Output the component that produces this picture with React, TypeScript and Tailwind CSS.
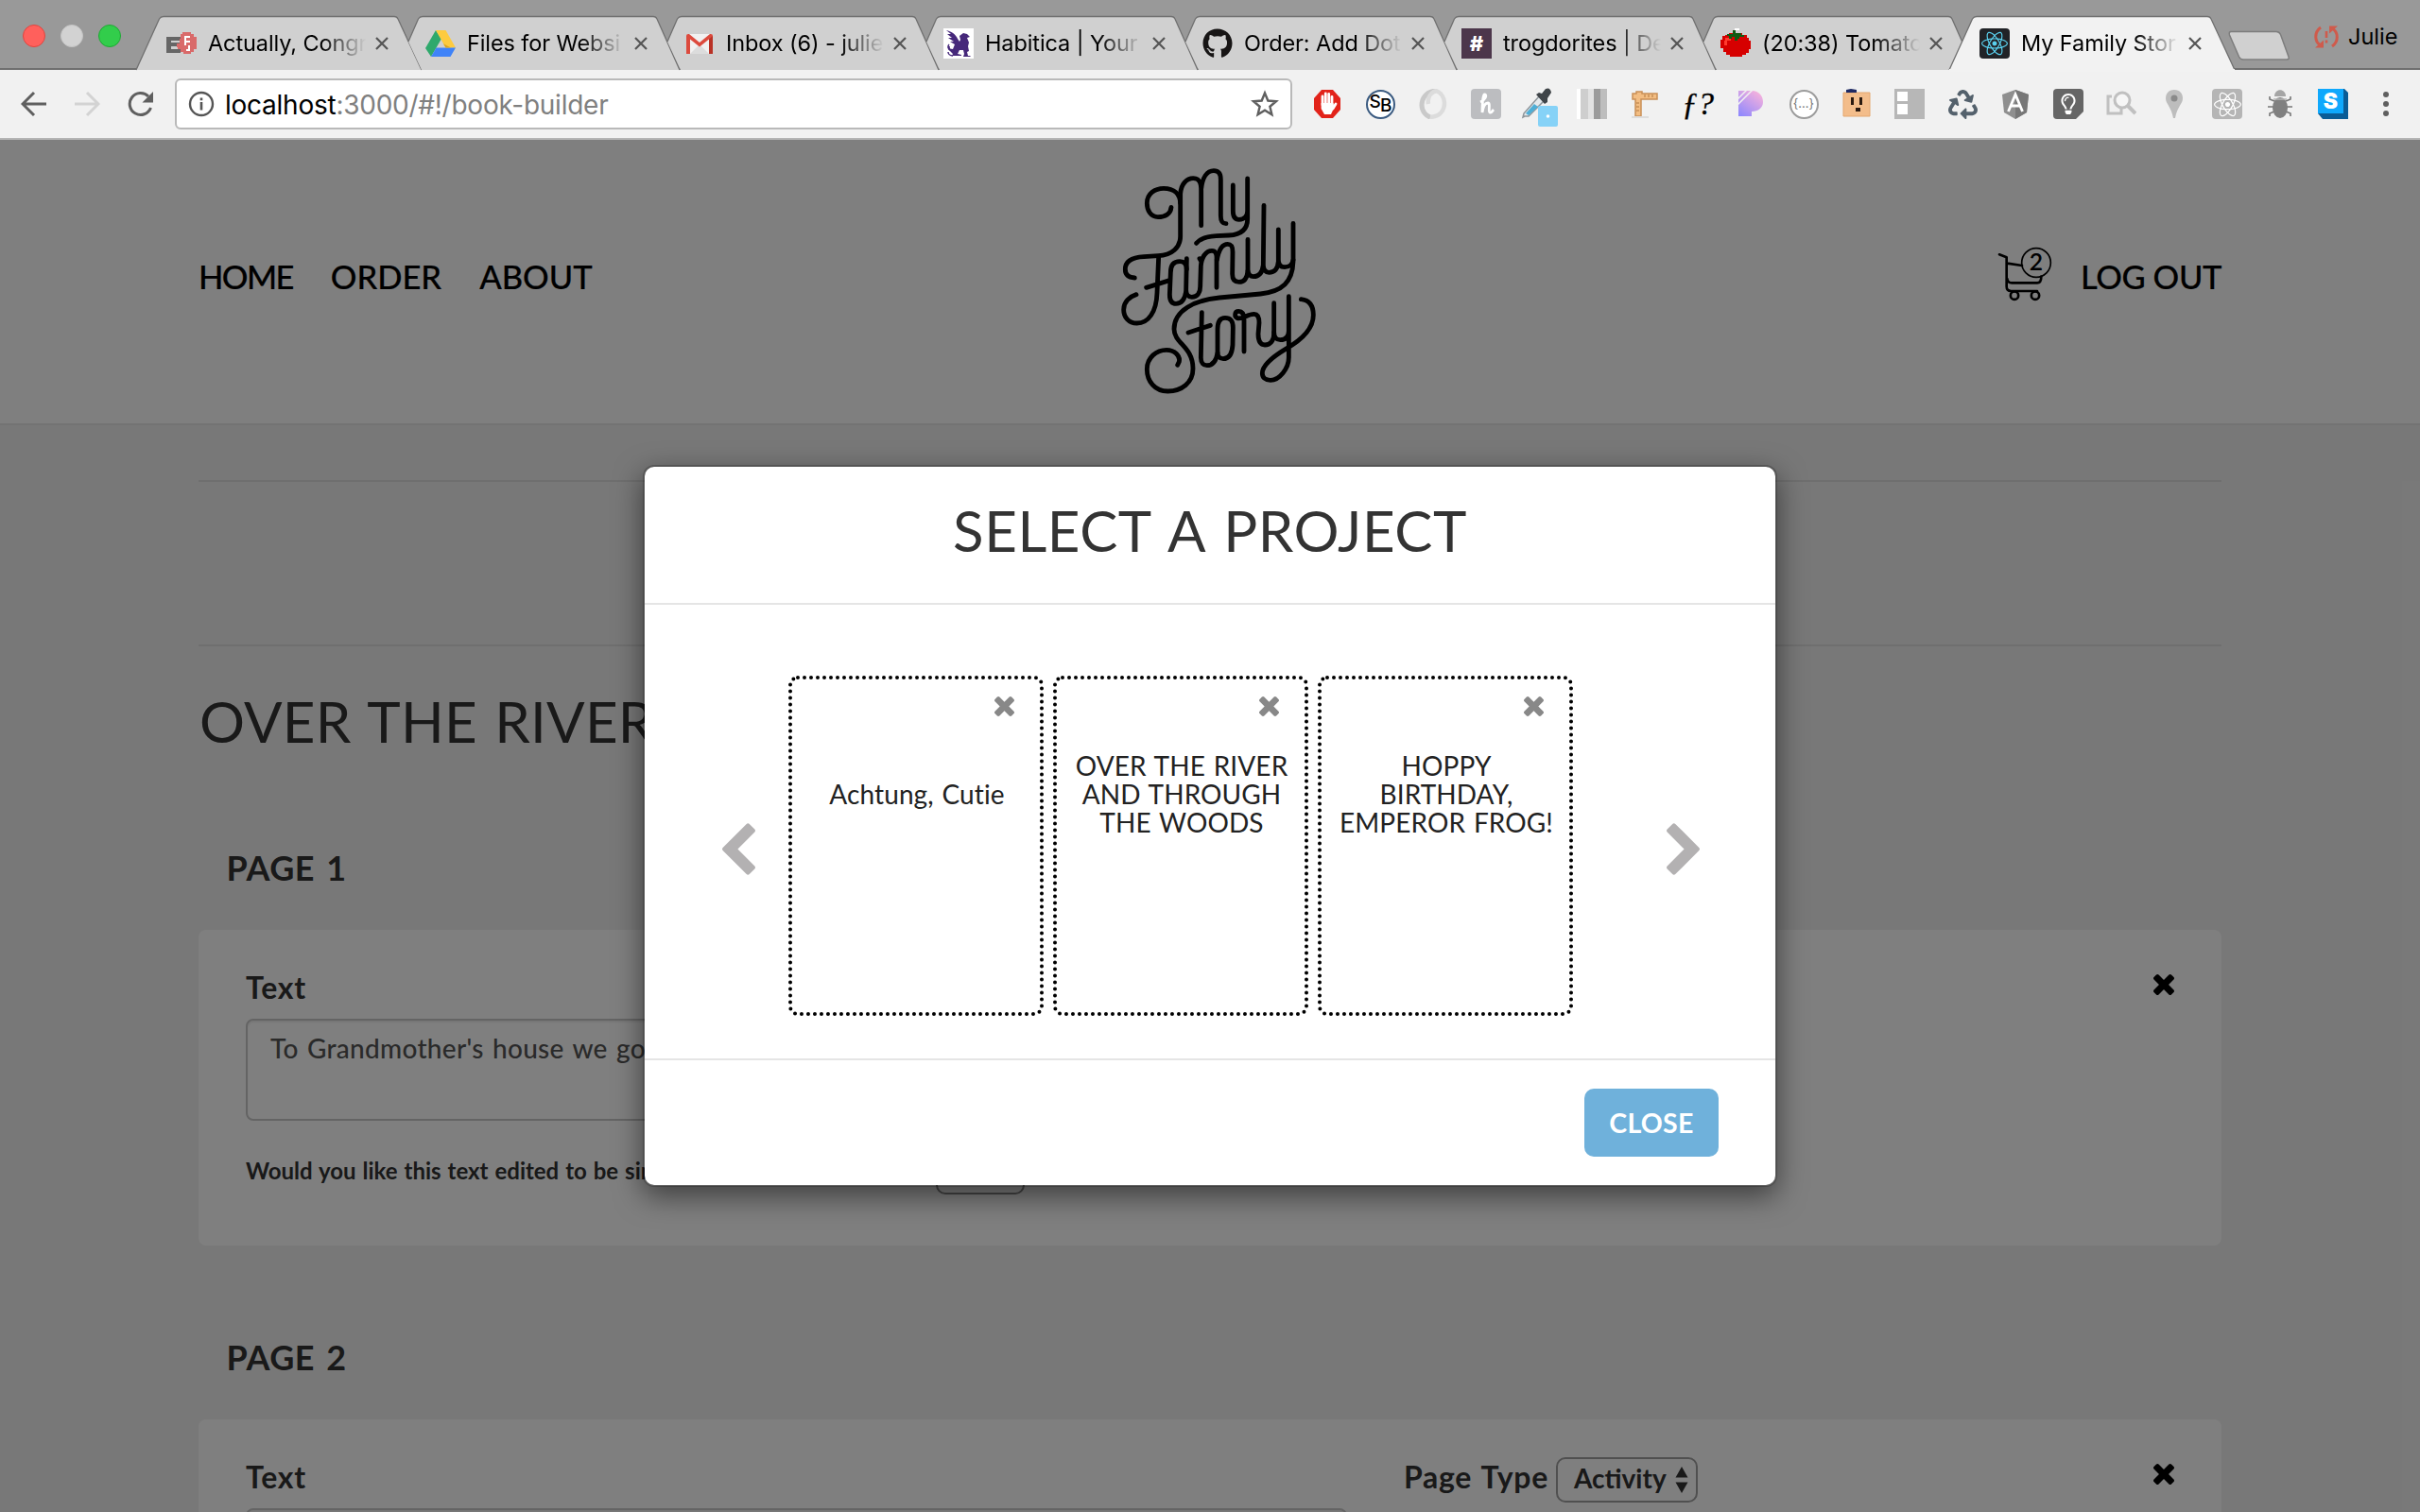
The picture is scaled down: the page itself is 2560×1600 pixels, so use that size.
import React from 'react';
import { FaGithub, FaReact, FaRecycle, FaRegLightbulb } from 'react-icons/fa';

/* ---------- Favicons ---------- */

const BrainIcon = () => (
  <svg viewBox="0 0 32 32" className="size-8">
    <path fill="#666" d="M0 9h15v4H5v2h9v4H5v3h10v4H0z" />
    <path
      fill="#d96a6a"
      d="M17 4h9v2h3v3h3v13h-3v3h-3v2h-8v-2h-3v-3h-3v-2h-1v-4h3v-5h1V6h2z"
    />
    <path fill="#fff" d="M19 8h6v2h-4v3h4v2h-4v3h-2zM23 18h2v6h-4v-2h2z" />
  </svg>
);

const DriveIcon = () => (
  <svg viewBox="0 0 32 32" className="size-8">
    <path fill="#2fa96c" d="M11 2 0 21l6 9 11-19z" />
    <path fill="#fdcb3f" d="M11 2h10.500L32 20.500H21.500z" />
    <path fill="#3f83f8" d="M11.500 20.500H32L26.500 30H6z" />
    <path fill="#d9a520" d="m19 16.200 8 4.300h-5.500z" />
  </svg>
);

const GmailIcon = () => (
  <svg viewBox="0 0 32 32" className="size-8">
    <path fill="#f1f1f1" d="M3 6h26v21H3z" />
    <path fill="#dcdcdc" d="m16 17 10 10H6z" />
    <path
      fill="#dc4a3d"
      d="M2 8q0-2 2-2h1l11 9 11-9h1q2 0 2 2v19h-4V11.500L16 19.500 6 11.500V27H2z"
    />
    <path fill="#b93226" d="M30 8v19h-4V11.500z" />
  </svg>
);

const HabiticaIcon = () => (
  <svg viewBox="0 0 32 32" className="size-8 bg-white">
    <path
      fill="#46287a"
      d="M3 2c5 1 10 4 12 9l2 3 1-2-1-4 4-3 4 1 3 3-3 1 2 5-1 4 1 5-2 1 1 4h3l-1 1h-7l1-3-1-4-4 0-2 4 4 1v1H9l1-2-3-3c-2-1-3-3-2-5l2 0c-1 3 1 3 3 3l2-5-5-3 4 0-6-4 4 0-5-4 4 0z"
    />
    <path
      fill="none"
      stroke="#46287a"
      strokeWidth="1.500"
      d="M8 23c-3-1-4-4-2-6M10 29c-3 0-5-2-5-4"
    />
  </svg>
);

const HashIcon = () => (
  <span className="flex size-8 items-center justify-center bg-[#4c364b] font-['Inter'] text-[22px] leading-8 font-extrabold text-white">
    #
  </span>
);

const TomatoIcon = () => (
  <svg viewBox="0 0 32 32" className="size-8">
    <path
      fill="#d60000"
      d="M9 5h14v2h5v3h2v3h2v9h-2v4h-3v2h-4v2H10v-2H6v-3H3v-4H0v-9h2v-4h3V7h4z"
    />
    <path fill="#ff3b2f" d="M5 10h6v3H7v5H4v-5h1z" />
    <path
      fill="#0f5a12"
      d="M13 2h3v3h6v2h3v2h-5v2h-2v2h-3V9h-3v2h-3V8h-2V6h6z"
    />
    <path fill="#fff" d="M15 0h5v2h-5z" />
  </svg>
);

const ReactTabIcon = () => (
  <span className="flex size-8 items-center justify-center rounded-sm bg-[#212327]">
    <FaReact className="size-7 text-[#5ad0ee]" />
  </span>
);

type Tab = { title: string; icon: React.ReactNode; active?: boolean };

const tabs: Tab[] = [
  { title: 'Actually, Congr', icon: <BrainIcon /> },
  { title: 'Files for Websi', icon: <DriveIcon /> },
  { title: 'Inbox (6) - julie', icon: <GmailIcon /> },
  { title: 'Habitica | Your', icon: <HabiticaIcon /> },
  { title: 'Order: Add Dot', icon: <FaGithub className="size-8 text-[#171515]" /> },
  { title: 'trogdorites | De', icon: <HashIcon /> },
  { title: '(20:38) Tomato', icon: <TomatoIcon /> },
  { title: 'My Family Stor', icon: <ReactTabIcon />, active: true },
];

/* Trapezoid outlines: the first and active tabs show both slopes in full,
   the others start where the previous tab's right slope crosses. */
function TabShape({ first, active }: { first: boolean; active?: boolean }) {
  const full = first || active;
  return (
    <svg
      viewBox="0 0 302 57"
      className="absolute top-0 left-0 h-[57px] w-[302px] overflow-visible"
    >
      <path
        fill={active ? '#f2f2f2' : '#d0d0d0'}
        d={
          full
            ? 'M0 57 24.500 3Q26 .5 29 .5H273Q276 .5 277 3L302 57z'
            : 'M14 27 24.500 3Q26 .5 29 .5H273Q276 .5 277 3L301 57H28z'
        }
      />
      <path
        fill="none"
        stroke="#707070"
        strokeWidth="1.300"
        d={
          full
            ? 'M0 57 24.500 3Q26 .5 29 .5H273Q276 .5 277 3L302 57'
            : 'M14 27 24.500 3Q26 .5 29 .5H273Q276 .5 277 3L301 57'
        }
      />
      {active && <path fill="#f2f2f2" d="M0 56H302V59H0z" />}
    </svg>
  );
}

function TabStrip() {
  return (
    <div className="relative flex h-[74px] border-b-2 border-[#6f6f6f] bg-[#999999]">
      <div className="flex w-[144px] gap-4 pt-[26px] pl-6">
        <span className="size-6 rounded-full border border-[#e0443e] bg-[#ff605c]" />
        <span className="size-6 rounded-full border border-[#c4c4c4] bg-[#d2d2d2]" />
        <span className="size-6 rounded-full border border-[#1fa834] bg-[#32cd4b]" />
      </div>
      <div className="flex pt-[17px]">
        {tabs.map((tab, i) => (
          <div key={tab.title} className="relative h-[57px] w-[274px]">
            <TabShape first={i === 0} active={tab.active} />
            <div className="relative flex h-[57px] items-center pl-8">
              {tab.icon}
              <span className="ml-3 w-[167px] overflow-hidden font-['Inter'] text-[23.5px] leading-[30px] tracking-[-0.1px] whitespace-nowrap text-black [mask-image:linear-gradient(to_right,black_72%,transparent)]">
                {tab.title}
              </span>
              <svg viewBox="0 0 14 14" className="ml-[10px] size-[14px]">
                <path d="M1 1l12 12M13 1 1 13" stroke="#555" strokeWidth="2.200" />
              </svg>
            </div>
          </div>
        ))}
      </div>
      <svg viewBox="0 0 68 34" className="mt-8 ml-5 h-[34px] w-[68px]">
        <path
          d="M4 1.500h48q3 0 4.500 3L65 28q1 3-2 3H17q-3 0-4.500-3L2.500 5Q1.500 1.500 4 1.500z"
          fill="#d0d0d0"
          stroke="#7d7d7d"
          strokeWidth="1.500"
        />
      </svg>
      <div className="mt-[23px] ml-[24px] flex h-8 items-center gap-[10px]">
        <svg viewBox="0 0 26 26" className="size-[26px]" fill="none" stroke="#cf5b4c">
          <path d="M7 3C0 8 0 18 7 22M19 23C26 18 26 8 19 4" strokeWidth="3" />
          <path d="M1 24.500h9v-8zM25 1.500h-9v8z" fill="#cf5b4c" stroke="none" />
          <path d="M13 7v7M13 16.500v3" strokeWidth="2.600" />
        </svg>
        <span className="font-['Inter'] text-[23.500px] leading-8 text-black">Julie</span>
      </div>
    </div>
  );
}

/* ---------- Toolbar ---------- */

const extensions: React.ReactNode[] = [
  <svg viewBox="0 0 32 32" className="size-8">
    <path fill="#e2231a" d="M10 1h12l8 9v12l-8 9H10l-8-9V10z" />
    <path
      stroke="#fff"
      strokeWidth="2.800"
      strokeLinecap="round"
      d="M11 17V8M14.300 16V5M17.700 16V5.500M21 17V8.500M22 21l3-5"
    />
    <path fill="#fff" d="M9.600 15h12.800l1 4.500-3.400 7.500h-7l-3.400-6z" />
  </svg>,
  <span className="flex size-[31px] items-center justify-center rounded-full border-2 border-[#3a5a80] bg-white font-['Inter'] text-[19px] font-medium tracking-[-1px] text-black">
    <span className="-mt-1">S</span>
    <span className="mt-1">B</span>
  </span>,
  <svg viewBox="0 0 32 32" className="size-8" fill="none">
    <path d="M19 2C7 3 4 12 4 17c0 7 5 12 9 13" stroke="#c9c9c9" strokeWidth="5" />
    <path d="M13 30c12-1 15-9 15-15 0-6-4-11-9-13-7 3-9 9-8 14" stroke="#dcdcdc" strokeWidth="4.500" />
  </svg>,
  <span className="flex size-8 items-center justify-center rounded bg-[#bcbdc0]">
    <svg viewBox="0 0 24 24" className="size-6" fill="none" stroke="#fff" strokeWidth="2.800">
      <path d="M6 10c5-2 7-7 5-8S8 9 8 21c1-7 3-10 6-10s0 9 2 10 3-2 4-3" />
    </svg>
  </span>,
  <svg viewBox="0 0 40 42" className="mt-2 ml-1 size-[42px] shrink-0">
    <path d="M3 30 1 31l1-4L18 9l5 5L7 30z" fill="#e4e9ec" stroke="#8d9499" strokeWidth="1.500" />
    <path d="M4 27 13 17l4 3L7 29z" fill="#4eaed6" />
    <path d="m15 7 3-2 3 1 4-5q5-2 6 4l-4 6 0 4-3 2z" fill="#3f4448" />
    <rect x="17" y="19" width="21" height="22" rx="2" fill="#86d2f7" />
    <circle cx="27.500" cy="30" r="1.800" fill="#fff" />
  </svg>,
  <span className="flex size-8">
    <span className="w-1 bg-white" />
    <span className="w-2 bg-[#cecece]" />
    <span className="w-1.5 bg-[#e2e2e2]" />
    <span className="w-[7px] bg-[#9b9b9b]" />
    <span className="w-[7px] bg-[#bdbdbd]" />
  </span>,
  <svg viewBox="0 0 32 32" className="size-8">
    <path fill="#f3bd82" stroke="#c98f55" strokeWidth="1.500" d="M3 5h4V3h6v2h16v6H12v18H6V11H3z" />
    <path stroke="#b07840" d="M16 6v3M20 6v3M24 6v3M7 15h3M7 19h3M7 23h3" />
    <path fill="#ddd" d="M2 29h18v2H2z" />
  </svg>,
  <span className="font-['Liberation_Serif'] text-[34px] leading-8 text-black italic [-webkit-text-stroke:0.3px_black]">ƒ?</span>,
  <svg viewBox="0 0 32 32" className="size-8">
    <defs>
      <linearGradient id="pan" x1="0" y1="1" x2=".7" y2="0">
        <stop offset="0" stopColor="#8a86ff" />
        <stop offset="1" stopColor="#f3b0dd" />
      </linearGradient>
    </defs>
    <path fill="url(#pan)" d="M3 2h14c8 0 12 6 12 12s-5 10-12 10v5H3z" />
    <path stroke="#f1f1f1" strokeWidth="1.500" d="M2 11 12 1M2 17 18 1" />
  </svg>,
  <span className="flex size-[31px] items-center justify-center rounded-full border-2 border-[#9c9c9c] bg-white font-['Inter'] text-[13px] text-[#777]">
    {'{...}'}
  </span>,
  <svg viewBox="0 0 32 32" className="size-8">
    <path fill="#f3bd8b" stroke="#e5a76f" d="M2 4h28v25H2z" />
    <path fill="#1f2a63" d="M5 4V1l5-1 6 1v3z" />
    <path fill="#2b1a10" d="M10 9h3v8h-3zM19 9h3v8h-3zM15 20h5v4h-5z" />
  </svg>,
  <svg viewBox="0 0 32 32" className="size-8">
    <path fill="#b7b7b7" d="M0 0h32v32H0z" />
    <path fill="#fff" d="M3 3h11v10H3zM3 16h11v11H3z" />
  </svg>,
  <FaRecycle className="size-[31px] text-[#54616c]" />,
  <svg viewBox="0 0 32 32" className="size-8">
    <path fill="#8f8f8f" d="m16 1 14 5-2 19-12 7-12-7L2 6z" />
    <path fill="#777" d="m16 1 14 5-2 19-12 7z" />
    <path fill="none" stroke="#fff" strokeWidth="2.800" d="m8.500 24 7.500-18 7.500 18M11.500 18h9" />
  </svg>,
  <span className="flex size-8 items-center justify-center rounded-sm bg-[#666] [clip-path:polygon(0_0,100%_0,100%_75%,75%_100%,0_100%)]">
    <FaRegLightbulb className="size-[22px] text-white" />
  </span>,
  <svg viewBox="0 0 32 32" className="size-8" fill="none" stroke="#c0c0c0">
    <path d="M6 8H2v18h14v-5" strokeWidth="3" />
    <circle cx="17" cy="12" r="8" strokeWidth="3" fill="#f6f6f6" />
    <path d="m23 18 8 8" strokeWidth="4" />
  </svg>,
  <svg viewBox="0 0 32 32" className="size-8">
    <path fill="#bdbdbd" d="M16 1c6 0 9 4 9 9 0 6-6 9-8 21h-2C13 19 7 16 7 10c0-5 3-9 9-9z" />
    <circle cx="16" cy="10" r="3.500" fill="#8a8a8a" />
  </svg>,
  <span className="flex size-8 items-center justify-center rounded-sm bg-[#b5b5b5]">
    <FaReact className="size-[29px] text-white" />
  </span>,
  <svg viewBox="0 0 32 32" className="size-8">
    <path fill="none" stroke="#777" strokeWidth="1.600" d="M10 13 5 11V8M9 19H3M10 24l-5 2v3M22 13l5-2V8M23 19h6M22 24l5 2v3" />
    <path fill="#a5a5a5" d="M10 8c0-9 12-9 12 0z" />
    <ellipse cx="16" cy="20" rx="8" ry="11" fill="#808080" />
    <path stroke="#b5b5b5" strokeWidth="1.500" d="M9 11h14" />
  </svg>,
  <svg viewBox="0 0 32 32" className="size-8">
    <path fill="#0a5c96" d="M0 0h28l4 4v28H5l-5-6z" />
    <path fill="#0fa8fc" d="M0 0h27v26H0z" />
    <text x="13.500" y="21" textAnchor="middle" fontFamily="Inter" fontWeight="900" fontSize="23" fill="#fff">
      S
    </text>
  </svg>,
];

function Toolbar() {
  return (
    <div className="flex h-[74px] items-center border-b-2 border-[#b4b4b4] bg-[#f1f1f1] pl-[22px]">
      <svg viewBox="0 0 28 28" className="size-7" fill="none" stroke="#5f5f5f" strokeWidth="3">
        <path d="M27 14H3M14 2 2 14l12 12" />
      </svg>
      <svg viewBox="0 0 28 28" className="ml-7 size-7" fill="none" stroke="#d3d3d3" strokeWidth="3">
        <path d="M1 14h24M14 2l12 12-12 12" />
      </svg>
      <svg viewBox="0 0 28 28" className="ml-7 size-7" fill="none" stroke="#5f5f5f" strokeWidth="3">
        <path d="M25.500 18A11.500 11.500 0 1 1 23 6" />
        <path d="M28 1v11.500H16.500z" fill="#5f5f5f" stroke="none" />
      </svg>
      <div className="ml-[23px] flex h-[54px] w-[1182px] items-center rounded-md border-2 border-[#b9b9b9] bg-white pl-3">
        <svg viewBox="0 0 28 28" className="size-7" fill="none" stroke="#555">
          <circle cx="14" cy="14" r="12" strokeWidth="2.400" />
          <path d="M14 12v8.500M14 7.500v2.700" strokeWidth="2.600" />
        </svg>
        <span className="mt-px ml-[11px] font-['Inter'] text-[28px] leading-[34px] tracking-[-0.25px] text-[#808080]">
          <span className="text-black">localhost</span>:3000/#!/book-builder
        </span>
        <svg viewBox="0 0 30 30" className="mr-3 ml-auto size-[30px]" fill="none" stroke="#5f5f5f" strokeWidth="2.400">
          <path d="m15 3.500 3.300 8 8.700.700-6.600 5.600 2 8.400L15 21.700l-7.400 4.500 2-8.400L3 12.200l8.700-.700z" />
        </svg>
      </div>
      <div className="ml-[9px] flex">
        {extensions.map((icon, i) => (
          <span key={i} className="flex h-8 w-14 items-center justify-center">
            {icon}
          </span>
        ))}
      </div>
      <div className="ml-[25px] flex flex-col gap-[4px]">
        <span className="size-1.5 rounded-full bg-[#5f5f5f]" />
        <span className="size-1.5 rounded-full bg-[#5f5f5f]" />
        <span className="size-1.5 rounded-full bg-[#5f5f5f]" />
      </div>
    </div>
  );
}

/* ---------- Site ---------- */

const Logo = () => (
  <svg
    viewBox="0 0 780 840"
    className="mt-3 h-[280px] w-[260px]"
    fill="none"
    stroke="#000"
    strokeWidth="14.500"
    strokeLinecap="round"
    strokeLinejoin="round"
  >
    <path d="M237 178C235 200 217 209 195 209C172 209 160 188 160 165C160 135 185 118 213 118C245 118 266 135 266 168V270C266 305 240 330 195 332L150 335C110 337 91 352 91 375C91 393 104 401 121 402" />
    <path d="M266 165V135C268 105 285 86 307 86C327 86 332 100 332 125V236M332 120C336 85 350 62 372 62C390 62 394 74 394 90V205C394 222 398 230 411 230" />
    <path d="M433 108V190C433 210 440 217 452 217C470 217 479 205 479 190M479 87V215C479 250 455 265 420 267L380 269C350 271 328 278 317 292" />
    <path d="M197 335 192 450C190 510 165 546 128 546C102 546 86 527 86 503C86 478 105 462 126 455M158 433 232 410" />
    <path d="M286 375C286 355 276 350 264 350C243 350 235 365 235 385L232 455C232 475 240 484 252 484C268 484 280 470 284 445" />
    <path d="M286 341 284 440C284 455 292 463 302 463C320 463 329 450 329 430L331 365C333 335 348 316 366 316C380 316 382 330 381 345V433M327 341 332 350" />
    <path d="M382 345C388 312 400 295 416 295C430 295 432 305 432 320L431 390C431 408 440 415 452 415C470 415 478 400 480 380V280" />
    <path d="M480 380C482 392 488 398 498 398C515 398 526 385 529 362L531 172M529 362C530 378 536 385 547 385C565 385 575 375 577 350V249M577 345C577 360 584 368 597 368C612 368 622 358 624 345" />
    <path d="M624 229V350C622 415 590 445 520 453L390 465C310 473 246 505 246 565C246 610 306 620 306 690C306 735 270 762 226 762C185 762 160 730 160 692C160 655 190 631 222 631C248 631 266 650 262 668L257 679" />
    <path d="M334 512 331 655C331 672 340 680 350 680C368 680 380 665 384 640M291 576 361 553" />
    <path d="M384 640V565C384 540 392 529 408 529C427 529 433 540 433 560L432 615C430 645 420 659 402 659C390 659 384 650 384 640" />
    <path d="M468 636V535C468 515 460 508 451 508C437 508 437 526 447 530C462 535 478 517 500 517C514 517 516 530 516 545L513 580C513 603 520 615 534 615C552 615 563 600 563 580V482" />
    <path d="M563 575C563 590 572 599 583 599C600 599 610 590 610 570M610 461V655C610 690 580 727 552 727C535 727 526 718 526 705C526 680 555 655 600 628C650 600 688 565 688 520C688 490 675 473 649 470" />
  </svg>
);

const Cart = () => (
  <svg
    viewBox="96 60 180 180"
    className="mt-[112px] size-[60px]"
    fill="none"
    stroke="#000"
    strokeWidth="8"
    strokeLinecap="round"
    strokeLinejoin="round"
  >
    <path d="M105 88 128 97V190Q128 204 142 204H225M130 116 177 123M130 165Q131 178 145 178H225Q238 178 238 158" />
    <circle cx="153" cy="218" r="12.500" />
    <circle cx="219" cy="218" r="12.500" />
    <circle cx="222" cy="114" r="46" strokeWidth="5" />
    <text
      x="222"
      y="139"
      textAnchor="middle"
      fontFamily="Lato"
      fontWeight="600"
      fontSize="74"
      fill="#000"
      stroke="none"
    >
      2
    </text>
  </svg>
);

const Cross = ({ className }: { className: string }) => (
  <svg viewBox="110 366 1188 1188" className={className} fill="currentColor">
    <path d="M1298 1322q0 40-28 68l-136 136q-28 28-68 28t-68-28l-294-294-294 294q-28 28-68 28t-68-28l-136-136q-28-28-28-68t28-68l294-294-294-294q-28-28-28-68t28-68l136-136q28-28 68-28t68 28l294 294 294-294q28-28 68-28t68 28l136 136q28 28 28 68t-28 68l-294 294 294 294q28 28 28 68z" />
  </svg>
);

const Chevron = ({ className }: { className: string }) => (
  <svg viewBox="410 26 1036 1612" className={className} fill="#b3b1b2">
    <path d="M1427 301l-531 531 531 531q19 19 19 45t-19 45l-166 166q-19 19-45 19t-45-19l-742-742q-19-19-19-45t19-45l742-742q19-19 45-19t45 19l166 166q19 19 19 45t-19 45z" />
  </svg>
);

function SiteHeader() {
  return (
    <header className="h-[302px] border-b-2 border-[#e7e7e7] bg-white">
      <div className="ml-[210px] grid w-[2140px] grid-cols-[950px_260px_1fr] items-start">
        <nav className="mt-[125px] flex gap-10 text-[34.5px] leading-10 font-medium text-black [-webkit-text-stroke:0.2px_black]">
          <a className="tracking-[-1.6px]">HOME</a>
          <a>ORDER</a>
          <a>ABOUT</a>
        </nav>
        <Logo />
        <div className="flex items-start justify-end gap-[29px]">
          <Cart />
          <a className="mt-[125px] text-[34.5px] leading-10 font-medium tracking-[-0.4px] text-black [-webkit-text-stroke:0.2px_black]">
            LOG OUT
          </a>
        </div>
      </div>
    </header>
  );
}

const SelectArrows = () => (
  <svg viewBox="0 0 14 28" className="h-7 w-3.5">
    <path d="M7 0l6.500 11.500H.5zM7 28l6.500-11.500H.5z" fill="#333" />
  </svg>
);

function BookPage({ number, text }: { number: number; text: string }) {
  return (
    <section>
      <h2 className="ml-[29.5px] pt-px text-[36px] leading-[39px] font-bold tracking-[0.5px] [word-spacing:3px] text-[#333]">
        PAGE {number}
      </h2>
      <div className="mt-[46px] flex h-[334px] rounded-lg bg-white pt-10 pl-[50px]">
        <div className="w-[1165px]">
          <label className="block pt-px text-[32px] leading-[39px] font-bold tracking-[0.8px] text-[#333]">
            Text
          </label>
          <div className="mt-[14px] h-[108px] rounded-lg border-2 border-[#c8c8c8] pt-[9px] pl-6 text-[28px] leading-10 font-medium tracking-[0.28px] [word-spacing:2px] text-[#555] shadow-[inset_0_2px_2px_rgba(0,0,0,0.075)]">
            {text}
          </div>
          <div className="mt-[30px] flex h-12 items-center">
            <label className="w-[730px] pb-0.5 text-[24px] leading-8 font-bold [word-spacing:1.1px] whitespace-nowrap text-[#333]">
              Would you like this text edited to be simpler?
            </label>
            <div className="h-12 w-[94px] rounded-[10px] border-2 border-[#8c8c8c]" />
          </div>
        </div>
        <div className="ml-[60px] flex h-12 items-center">
          <label className="w-[161px] pb-[7px] text-[32px] leading-10 font-bold tracking-[0.7px] [word-spacing:2px] whitespace-nowrap text-[#333]">
            Page Type
          </label>
          <div className="flex h-12 w-[150px] items-center rounded-[10px] border-2 border-[#a0a0a0] pl-[17px] text-[28px] leading-10 font-bold text-[#333]">
            <span className="w-[107px] pb-[5px]">Activity</span>
            <SelectArrows />
          </div>
        </div>
        <Cross className="mt-[7px] mr-[50px] ml-auto size-[22px] text-black" />
      </div>
    </section>
  );
}

const projects = [
  'Achtung, Cutie',
  'OVER THE RIVER\nAND THROUGH\nTHE WOODS',
  'HOPPY\nBIRTHDAY,\nEMPEROR FROG!',
];

function ProjectCard({ title }: { title: string }) {
  return (
    <div className="relative h-[360px] w-[270px]">
      <svg viewBox="0 0 270 360" className="absolute inset-0 h-[360px] w-[270px]">
        <rect
          x="2"
          y="2"
          width="266"
          height="356"
          rx="8"
          fill="none"
          stroke="#000"
          strokeWidth="4"
          strokeLinecap="round"
          strokeDasharray="0 7"
        />
      </svg>
      <div className="flex justify-end pt-[22px] pr-[31px]">
        <Cross className="size-[21px] text-[#888]" />
      </div>
      <p className="mt-[37px] ml-0.5 flex h-[90px] items-center justify-center text-center text-[28px] leading-[30px] tracking-[0.1px] [word-spacing:1.5px] whitespace-pre-line text-[#222]">
        {title}
      </p>
    </div>
  );
}

function ProjectModal() {
  return (
    <div className="mt-[344px] h-[764px] w-[1200px] rounded-xl border-2 border-black/20 bg-white bg-clip-padding shadow-[0_10px_30px_rgba(0,0,0,0.5)]">
      <div className="h-[146px] border-b-2 border-[#e5e5e5] pt-[37px]">
        <h1 className="text-center text-[60px] leading-[60px] tracking-[0.6px] [word-spacing:4px] text-[#333]">
          SELECT A PROJECT
        </h1>
      </div>
      <div className="flex h-[480px] items-start pt-[75px] pl-[82px]">
        <Chevron className="mt-[156px] h-[55px] w-[35px]" />
        <div className="ml-[35px] flex gap-[10px]">
          {projects.map((title) => (
            <ProjectCard key={title} title={title} />
          ))}
        </div>
        <Chevron className="mt-[156px] ml-[99px] h-[55px] w-[35px] -scale-x-100" />
      </div>
      <div className="flex justify-end border-t-2 border-[#e5e5e5] pt-[30px] pr-[60px]">
        <button className="h-[72px] w-[142px] rounded-[10px] bg-[#6fb1db] text-[28.5px] font-bold tracking-[0.3px] text-white">
          CLOSE
        </button>
      </div>
    </div>
  );
}

export default function App() {
  return (
    <div className="flex h-[1600px] w-[2560px] flex-col overflow-hidden font-['Lato',sans-serif]">
      <TabStrip />
      <Toolbar />
      <div className="relative h-[1452px] overflow-hidden bg-[#f1f1f1]">
        <SiteHeader />
        <main className="mx-auto w-[2140px]">
          <div className="mt-[58px] h-0.5 bg-[#dedede]" />
          <div className="mt-[172px] h-0.5 bg-[#dedede]" />
          <h1 className="mt-[49px] ml-px text-[60px] leading-[60px] tracking-[0.2px] [word-spacing:3px] text-[#333]">
            OVER THE RIVER AND THROUGH THE WOODS
          </h1>
          <div className="mt-[105px] flex flex-col gap-[98px]">
            <BookPage number={1} text="To Grandmother's house we go" />
            <BookPage number={2} text="" />
          </div>
        </main>
        <div className="absolute inset-0 flex items-start justify-center bg-black/50">
          <ProjectModal />
        </div>
      </div>
    </div>
  );
}
